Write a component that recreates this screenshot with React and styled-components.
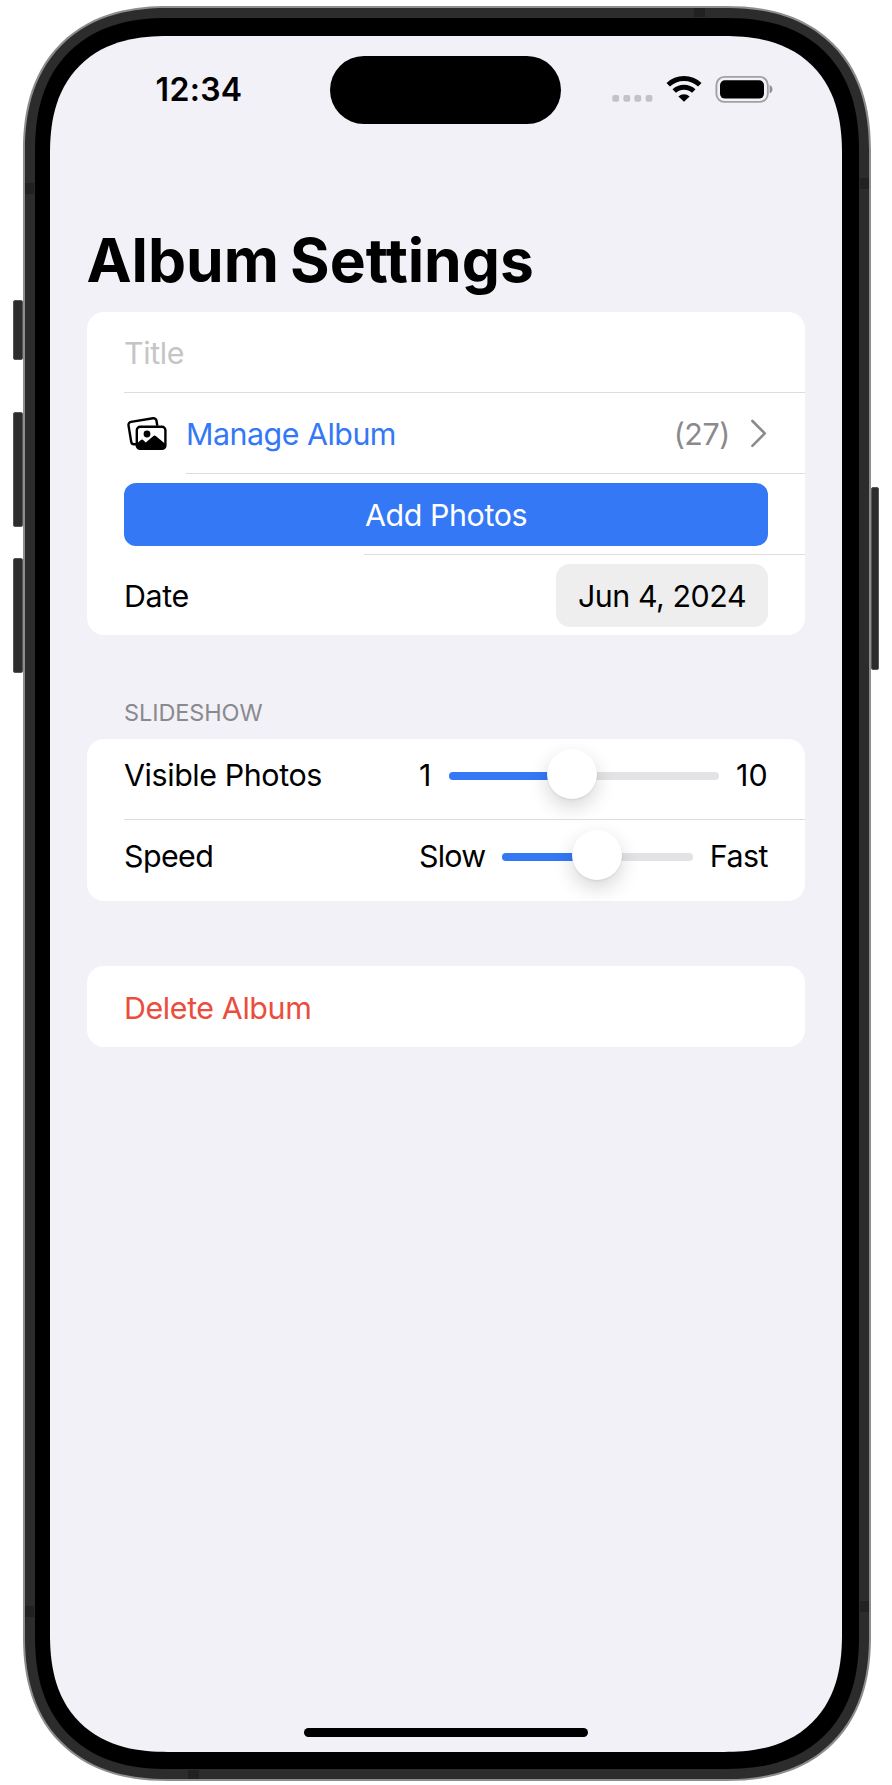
import React from 'react';
import styled, { createGlobalStyle, css } from 'styled-components';

const GlobalStyle = createGlobalStyle`
  *, *::before, *::after { box-sizing: border-box; }
  body { margin: 0; background: #fff; }
`;

// Continuous corners, with a plain radius where corner-shape is unavailable.
const squircle = (radius, curve, fallback) => css`
  border-radius: ${fallback}px;
  @supports (corner-shape: superellipse(1.2)) {
    border-radius: ${radius}px;
    corner-shape: superellipse(${curve});
  }
`;

const Stage = styled.div`
  display: flex;
  width: 892px;
  height: 1785px;
  overflow: hidden;
  font-family: Inter, "Liberation Sans", sans-serif;
  font-size: 30.4px;
  line-height: 36px;
  color: #000;
`;

const Rail = styled.div`
  display: flex;
  flex-direction: column;
  align-items: ${(p) => (p.$side === 'left' ? 'flex-end' : 'flex-start')};
  flex: none;
  width: ${(p) => (p.$side === 'left' ? 23 : 21)}px;
`;

const SideKey = styled.div`
  width: ${(p) => p.$w}px;
  height: ${(p) => p.$h}px;
  margin-top: ${(p) => p.$gap}px;
  background: #2c2c2c;
  border: 1px solid #555;
  border-radius: 2px;
`;

const Frame = styled.div`
  position: relative;
  flex: none;
  width: 848px;
  height: 1775px;
  margin-top: 6px;
  padding: 10px;
  background: #2c2c2c;
  border: 2px solid #8d8d8d;
  ${squircle(145, 1.212, 132)}
`;

const Antenna = styled.i`
  position: absolute;
  background: #212121;
  width: ${(p) => (p.$edge === 'x' ? 9 : 11)}px;
  height: ${(p) => (p.$edge === 'x' ? 11 : 9)}px;
  top: ${(p) => p.$top}px;
  left: ${(p) => p.$left}px;
`;

const Bezel = styled.div`
  height: 100%;
  padding: 18px 17px 17px 15px;
  background: #000;
  ${squircle(133, 1.231, 119)}
`;

const Screen = styled.main`
  display: flex;
  flex-direction: column;
  height: 100%;
  background: #f2f1f7;
  ${squircle(118, 1.26, 104)}
`;

const StatusBar = styled.header`
  display: grid;
  grid-template-columns: 280.4px 231px 1fr;
  align-items: start;
  height: 160px;
  padding-top: 20.4px;
`;

const Clock = styled.time`
  padding: 16.1px 0 0 105.6px;
  font-size: 32px;
  font-weight: 600;
  letter-spacing: ${(p) => p.$track}px;
`;

const Island = styled.div`
  height: 68px;
  border-radius: 34px;
  background: #000;
`;

const StatusIcons = styled.div`
  padding: 14.6px 0 0 48.6px;
  svg { display: block; }
`;

const Heading = styled.h1`
  margin: 0;
  padding: 33.5px 0 0 36.5px;
  height: 116px;
  line-height: 60px;
  font-size: 60.5px;
  font-weight: 700;
  letter-spacing: ${(p) => p.$track}px;
  word-spacing: -3px;
  white-space: nowrap;
`;

const Content = styled.div`
  display: flex;
  flex-direction: column;
  padding: 0 37px;
`;

const Card = styled.section`
  display: flex;
  flex-direction: column;
  border-radius: 17px;
  background: #fff;
  margin-bottom: ${(p) => p.$after || 0}px;
`;

const Row = styled.div`
  display: flex;
  align-items: center;
  height: ${(p) => p.$h || 80}px;
  padding: 0 37px;
  white-space: nowrap;
`;

const Divider = styled.div`
  height: 1px;
  margin-left: ${(p) => p.$inset}px;
  background: #dddde0;
`;

const Label = styled.span`
  display: inline-block;
  padding-top: 2px;
  letter-spacing: ${(p) => p.$track}px;
  color: ${(p) => p.$color || '#000'};
`;

const AlbumIcon = styled.svg`
  flex: none;
  width: 40px;
  height: 34px;
  margin: 2px 19px 0 3px;
`;

const Count = styled(Label)`
  margin-left: auto;
`;

const Chevron = styled.svg`
  flex: none;
  width: 18px;
  height: 30px;
  margin-left: 20px;
`;

const AddButton = styled.button`
  width: 645px;
  height: 63px;
  padding: 0;
  border: 0;
  border-radius: 12px;
  background: #3478f6;
  font: inherit;
`;

const DatePill = styled.div`
  display: flex;
  align-items: center;
  justify-content: center;
  width: 212px;
  height: 63px;
  margin-left: auto;
  border-radius: 14px;
  background: #eeeeef;
`;

const SectionTitle = styled.h2`
  margin: 0;
  height: 40px;
  padding: 0 0 0 37px;
  line-height: 28px;
  font-size: 23.5px;
  font-weight: 400;
  letter-spacing: ${(p) => p.$track}px;
  color: #8a8a8e;
`;

const SliderRow = styled(Row)`
  display: grid;
  grid-template-columns: 295px 1fr;
  padding-bottom: 8px;
  ${Label} { padding: 0 0 1px; }
`;

const SliderGroup = styled.div`
  display: flex;
  align-items: center;
  justify-content: space-between;
`;

const Track = styled.div`
  display: flex;
  align-items: center;
  width: ${(p) => p.$w}px;
  height: 8px;
  margin-top: 1px;
  margin-left: auto;
  margin-right: ${(p) => p.$end}px;
  border-radius: 4px;
  background: #e3e3e5;
`;

const Fill = styled.div`
  height: 8px;
  border-radius: 4px 0 0 4px;
  background: #3478f6;
`;

const Knob = styled.div`
  flex: none;
  width: 50px;
  height: 50px;
  margin: -4px 0 0 -25px;
  border-radius: 50%;
  background: #fff;
  box-shadow: 0 1px 2px rgba(0, 0, 0, 0.08), 0 8px 20px rgba(0, 0, 0, 0.16);
`;

const HomeBar = styled.div`
  width: 284px;
  height: 9px;
  margin: auto auto 15px;
  border-radius: 5px;
  background: #000;
`;

function StatusGlyphs() {
  return (
    <StatusIcons>
      <svg width="166" height="32" viewBox="0 0 166 32">
        {[2.3, 13.4, 24.4, 35.6].map((x) => (
          <rect key={x} x={x} y="24" width="6.8" height="6.8" rx="2" fill="#c3c2c7" />
        ))}
        <g fill="none" stroke="#000" strokeWidth="5">
          <path d="M58.2 13.8a23 23 0 0 1 31.6 0" />
          <path d="M64.2 20a14.4 14.4 0 0 1 19.6 0" />
        </g>
        <path d="M74 30.8l-5.6-5.4a8.2 8.2 0 0 1 11.2 0z" />
        <rect x="106.4" y="5.9" width="51.4" height="25" rx="8" fill="none" stroke="#a1a0a5" strokeWidth="1.9" />
        <rect x="110" y="9.2" width="44" height="18.4" rx="5" />
        <path d="M159.6 14v8.6c3.8-1.6 3.8-7 0-8.6z" fill="#8f8e93" />
      </svg>
    </StatusIcons>
  );
}

function Slider({ label, track, low, lowTrack, high, highTrack, width, end, value, height }) {
  return (
    <SliderRow $h={height}>
      <Label $track={track}>{label}</Label>
      <SliderGroup>
        <Label $track={lowTrack}>{low}</Label>
        <Track $w={width} $end={end}>
          <Fill style={{ width: value }} />
          <Knob />
        </Track>
        <Label $track={highTrack}>{high}</Label>
      </SliderGroup>
    </SliderRow>
  );
}

export default function App() {
  return (
    <>
      <GlobalStyle />
      <Stage>
        <Rail $side="left">
          <SideKey $w={10} $h={60} $gap={300} />
          <SideKey $w={10} $h={115} $gap={52} />
          <SideKey $w={10} $h={115} $gap={31} />
        </Rail>
        <Frame>
          <Bezel>
            <Screen>
              <StatusBar>
                <Clock $track={0.3}>12:34</Clock>
                <Island />
                <StatusGlyphs />
              </StatusBar>
              <Heading $track={-0.05}>Album Settings</Heading>
              <Content>
                <Card $after={64}>
                  <Row><Label $track={-0.4} $color="#c5c5c7">Title</Label></Row>
                  <Divider $inset={37} />
                  <Row>
                    <AlbumIcon viewBox="0 0 40 34">
                      <path d="M9 27.3H7.2a3 3 0 0 1-3-2.5L1.5 8.4a3 3 0 0 1 2.5-3.5L26 1.3a3 3 0 0 1 3.5 2.5l.8 5" fill="none" stroke="#000" strokeWidth="2.4" />
                      <rect x="9.8" y="9.8" width="28.6" height="22" rx="3.4" fill="#fff" stroke="#000" strokeWidth="2.4" />
                      <circle cx="20" cy="17" r="3.4" />
                      <path d="M9.8 26.5l4.4-3.8q.8-.6 1.6 0l3 2.7 7.6-6.4q1.2-1 2.4 0l9.6 8v1.4a3.5 3.5 0 0 1-3.5 3.5H13.3a3.5 3.5 0 0 1-3.5-3.5z" />
                    </AlbumIcon>
                    <Label $track={-0.5} $color="#3478f6">Manage Album</Label>
                    <Count $track={-0.4} $color="#8a8a8e">(27)</Count>
                    <Chevron viewBox="0 0 18 30">
                      <path d="M2.4 3l12.4 12.4L2.4 27.8" fill="none" stroke="#8a8a8e" strokeWidth="2.6" strokeLinecap="round" strokeLinejoin="round" />
                    </Chevron>
                  </Row>
                  <Divider $inset={99} />
                  <Row><AddButton><Label $track={-0.4} $color="#fff">Add Photos</Label></AddButton></Row>
                  <Divider $inset={277} />
                  <Row $h={80.4}>
                    <Label $track={-0.4}>Date</Label>
                    <DatePill><Label $track={-0.45}>Jun 4, 2024</Label></DatePill>
                  </Row>
                </Card>
                <SectionTitle $track={-0.1}>SLIDESHOW</SectionTitle>
                <Card $after={65.5}>
                  <Slider label="Visible Photos" track={-0.4} low="1" lowTrack={0} high="10" highTrack={0.2} width={269.5} end={17.5} value={122.5} height={80} />
                  <Divider $inset={37} />
                  <Slider label="Speed" track={-0.6} low="Slow" lowTrack={-0.8} high="Fast" highTrack={-0.5} width={191} end={16.5} value={95} height={80.5} />
                </Card>
                <Card>
                  <Row $h={80.5}><Label $track={-0.4} $color="#eb4d3d">Delete Album</Label></Row>
                </Card>
              </Content>
              <HomeBar />
            </Screen>
          </Bezel>
          <Antenna $edge="x" $left={0} $top={175} />
          <Antenna $edge="x" $left={0} $top={1598} />
          <Antenna $edge="x" $left={835} $top={170} />
          <Antenna $edge="x" $left={835} $top={1593} />
          <Antenna $edge="y" $left={669} $top={0} />
          <Antenna $edge="y" $left={163} $top={1762} />
        </Frame>
        <Rail $side="right">
          <SideKey $w={8} $h={183} $gap={487} />
        </Rail>
      </Stage>
    </>
  );
}
